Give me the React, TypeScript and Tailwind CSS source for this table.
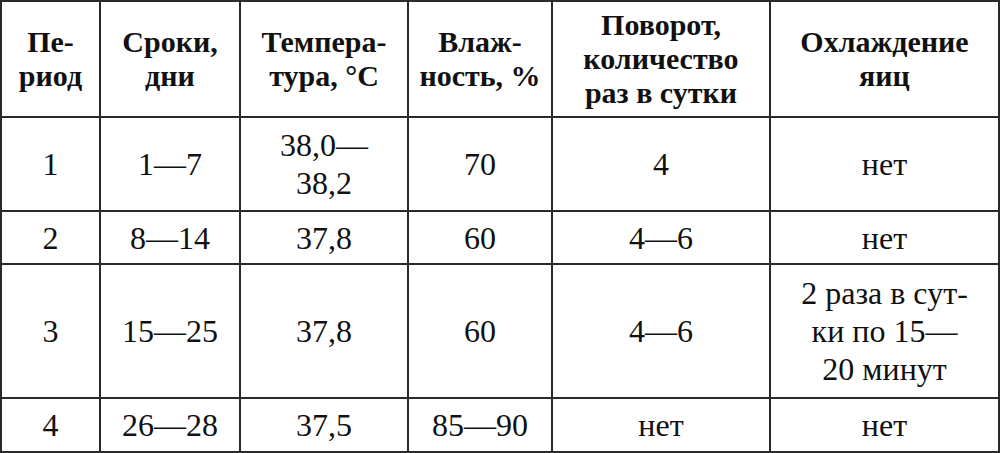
import React from "react";

const H = ({ children }: { children: React.ReactNode }) => (
  <div className="bg-white flex items-center justify-center text-center">
    <div className="font-['Liberation_Serif'] font-bold text-[30px] leading-[34px] whitespace-nowrap">{children}</div>
  </div>
);

const C = ({ children }: { children: React.ReactNode }) => (
  <div className="bg-white flex items-center justify-center text-center">
    <div className="font-['Liberation_Serif'] text-[32px] leading-[38px] whitespace-nowrap">{children}</div>
  </div>
);

export default function App() {
  return (
    <div className="w-[1000px] h-[453px] bg-white text-[#111] font-['Liberation_Serif']">
      <div className="grid w-[1000px] h-[453px] bg-[#2a2a2a] p-[2px] gap-[2px] grid-cols-[97px_138px_166px_142px_216px_227px] grid-rows-[114px_92px_51px_132px_52px]">
        <H>
          Пе-
          <br />
          риод
        </H>
        <H>
          Сроки,
          <br />
          дни
        </H>
        <H>
          Темпера-
          <br />
          тура, °С
        </H>
        <H>
          Влаж-
          <br />
          ность, %
        </H>
        <H>
          Поворот,
          <br />
          количество
          <br />
          раз в сутки
        </H>
        <H>
          Охлаждение
          <br />
          яиц
        </H>

        <C>1</C>
        <C>1—7</C>
        <C>
          38,0—
          <br />
          38,2
        </C>
        <C>70</C>
        <C>4</C>
        <C>нет</C>

        <C>2</C>
        <C>8—14</C>
        <C>37,8</C>
        <C>60</C>
        <C>4—6</C>
        <C>нет</C>

        <C>3</C>
        <C>15—25</C>
        <C>37,8</C>
        <C>60</C>
        <C>4—6</C>
        <C>
          2 раза в сут-
          <br />
          ки по 15—
          <br />
          20 минут
        </C>

        <C>4</C>
        <C>26—28</C>
        <C>37,5</C>
        <C>85—90</C>
        <C>нет</C>
        <C>нет</C>
      </div>
    </div>
  );
}
